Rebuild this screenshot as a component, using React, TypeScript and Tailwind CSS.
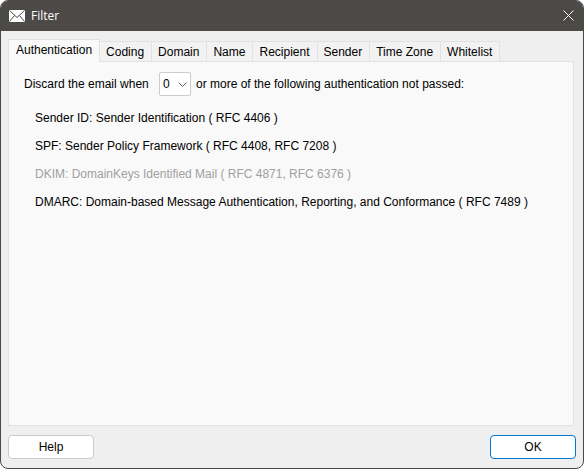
import { useState } from "react";

const tabs = [
  "Authentication",
  "Coding",
  "Domain",
  "Name",
  "Recipient",
  "Sender",
  "Time Zone",
  "Whitelist",
];

const methods = [
  { label: "Sender ID: Sender Identification ( RFC 4406 )", enabled: true },
  { label: "SPF: Sender Policy Framework ( RFC 4408, RFC 7208 )", enabled: true },
  { label: "DKIM: DomainKeys Identified Mail ( RFC 4871, RFC 6376 )", enabled: false },
  {
    label:
      "DMARC: Domain-based Message Authentication, Reporting, and Conformance ( RFC 7489 )",
    enabled: true,
  },
];

function MailIcon() {
  return (
    <svg width="16" height="12" viewBox="0 0 16 12" aria-hidden="true">
      <rect width="16" height="12" fill="#ffffff" />
      <path
        d="M0.5 0.5 L8 7.5 L15.5 0.5 M0.5 11.5 L5.5 5.5 M15.5 11.5 L10.5 5.5"
        fill="none"
        stroke="#4b4a47"
        strokeWidth="1"
      />
    </svg>
  );
}

function TitleBar() {
  return (
    <header className="flex h-[30px] shrink-0 items-center bg-[#4b4a47] pl-2 pr-2 text-white">
      <MailIcon />
      <h1 className="ml-1.5 flex-1 font-['Open_Sans','Noto_Sans',sans-serif] text-xs">Filter</h1>
      <button type="button" aria-label="Close" className="p-px pb-[3px]">
        <svg width="11" height="11" viewBox="0 0 11 11" aria-hidden="true">
          <path d="M0.5 0.5 L10.5 10.5 M10.5 0.5 L0.5 10.5" stroke="#ffffff" strokeWidth="1" />
        </svg>
      </button>
    </header>
  );
}

export default function App() {
  const [active, setActive] = useState(tabs[0]);
  const [count, setCount] = useState("0");

  return (
    <main className="flex h-screen flex-col overflow-hidden rounded-lg border border-[#4b4a47] bg-[#efefef] font-['Liberation_Sans',Arial,sans-serif] text-xs text-black">
      <TitleBar />
      <div className="flex flex-1 flex-col px-[7px] pt-2 pb-[9px]">
        <div role="tablist" className="flex items-end">
          {tabs.map((tab) => (
            <button
              key={tab}
              type="button"
              role="tab"
              aria-selected={tab === active}
              onClick={() => setActive(tab)}
              className={
                tab === active
                  ? "relative -mb-px h-[23px] whitespace-nowrap border border-b-0 border-[#e2e2e2] bg-[#f9f9f9] px-[7px] pb-0.5"
                  : "h-5 whitespace-nowrap border-t border-r border-[#e2e2e2] bg-[#f2f2f2] pr-[7px] pl-1.5"
              }
            >
              {tab}
            </button>
          ))}
        </div>
        <section
          role="tabpanel"
          className="mr-0.5 flex-1 border border-[#e2e2e2] bg-[#f9f9f9] pt-2.5 pl-[15px]"
        >
          <div className="flex items-center">
            <label htmlFor="count" className="w-[130px]">
              Discard the email when
            </label>
            <div className="relative mx-[5px]">
              <select
                id="count"
                value={count}
                onChange={(e) => setCount(e.target.value)}
                className="block h-6 w-8 appearance-none rounded-xs border border-[#cccccc] bg-white pl-[3px]"
              >
                {["0", "1", "2", "3"].map((n) => (
                  <option key={n}>{n}</option>
                ))}
              </select>
              <svg
                className="pointer-events-none absolute top-2.5 right-1"
                width="9"
                height="5"
                viewBox="0 0 9 5"
                aria-hidden="true"
              >
                <path d="M0.5 0.5 L4.5 4.5 L8.5 0.5" fill="none" stroke="#606060" />
              </svg>
            </div>
            <span>or more of the following authentication not passed:</span>
          </div>
          <ul className="mt-2 pl-[11px] leading-7">
            {methods.map((m) => (
              <li key={m.label} className={m.enabled ? "" : "text-[#a0a0a0]"}>
                {m.label}
              </li>
            ))}
          </ul>
        </section>
        <footer className="mt-[9px] flex justify-between">
          <button
            type="button"
            className="h-6 w-[86px] rounded-sm border border-[#cccccc] bg-white"
          >
            Help
          </button>
          <button
            type="button"
            className="h-6 w-[86px] rounded-sm border border-[#0078d4] bg-white"
          >
            OK
          </button>
        </footer>
      </div>
    </main>
  );
}
